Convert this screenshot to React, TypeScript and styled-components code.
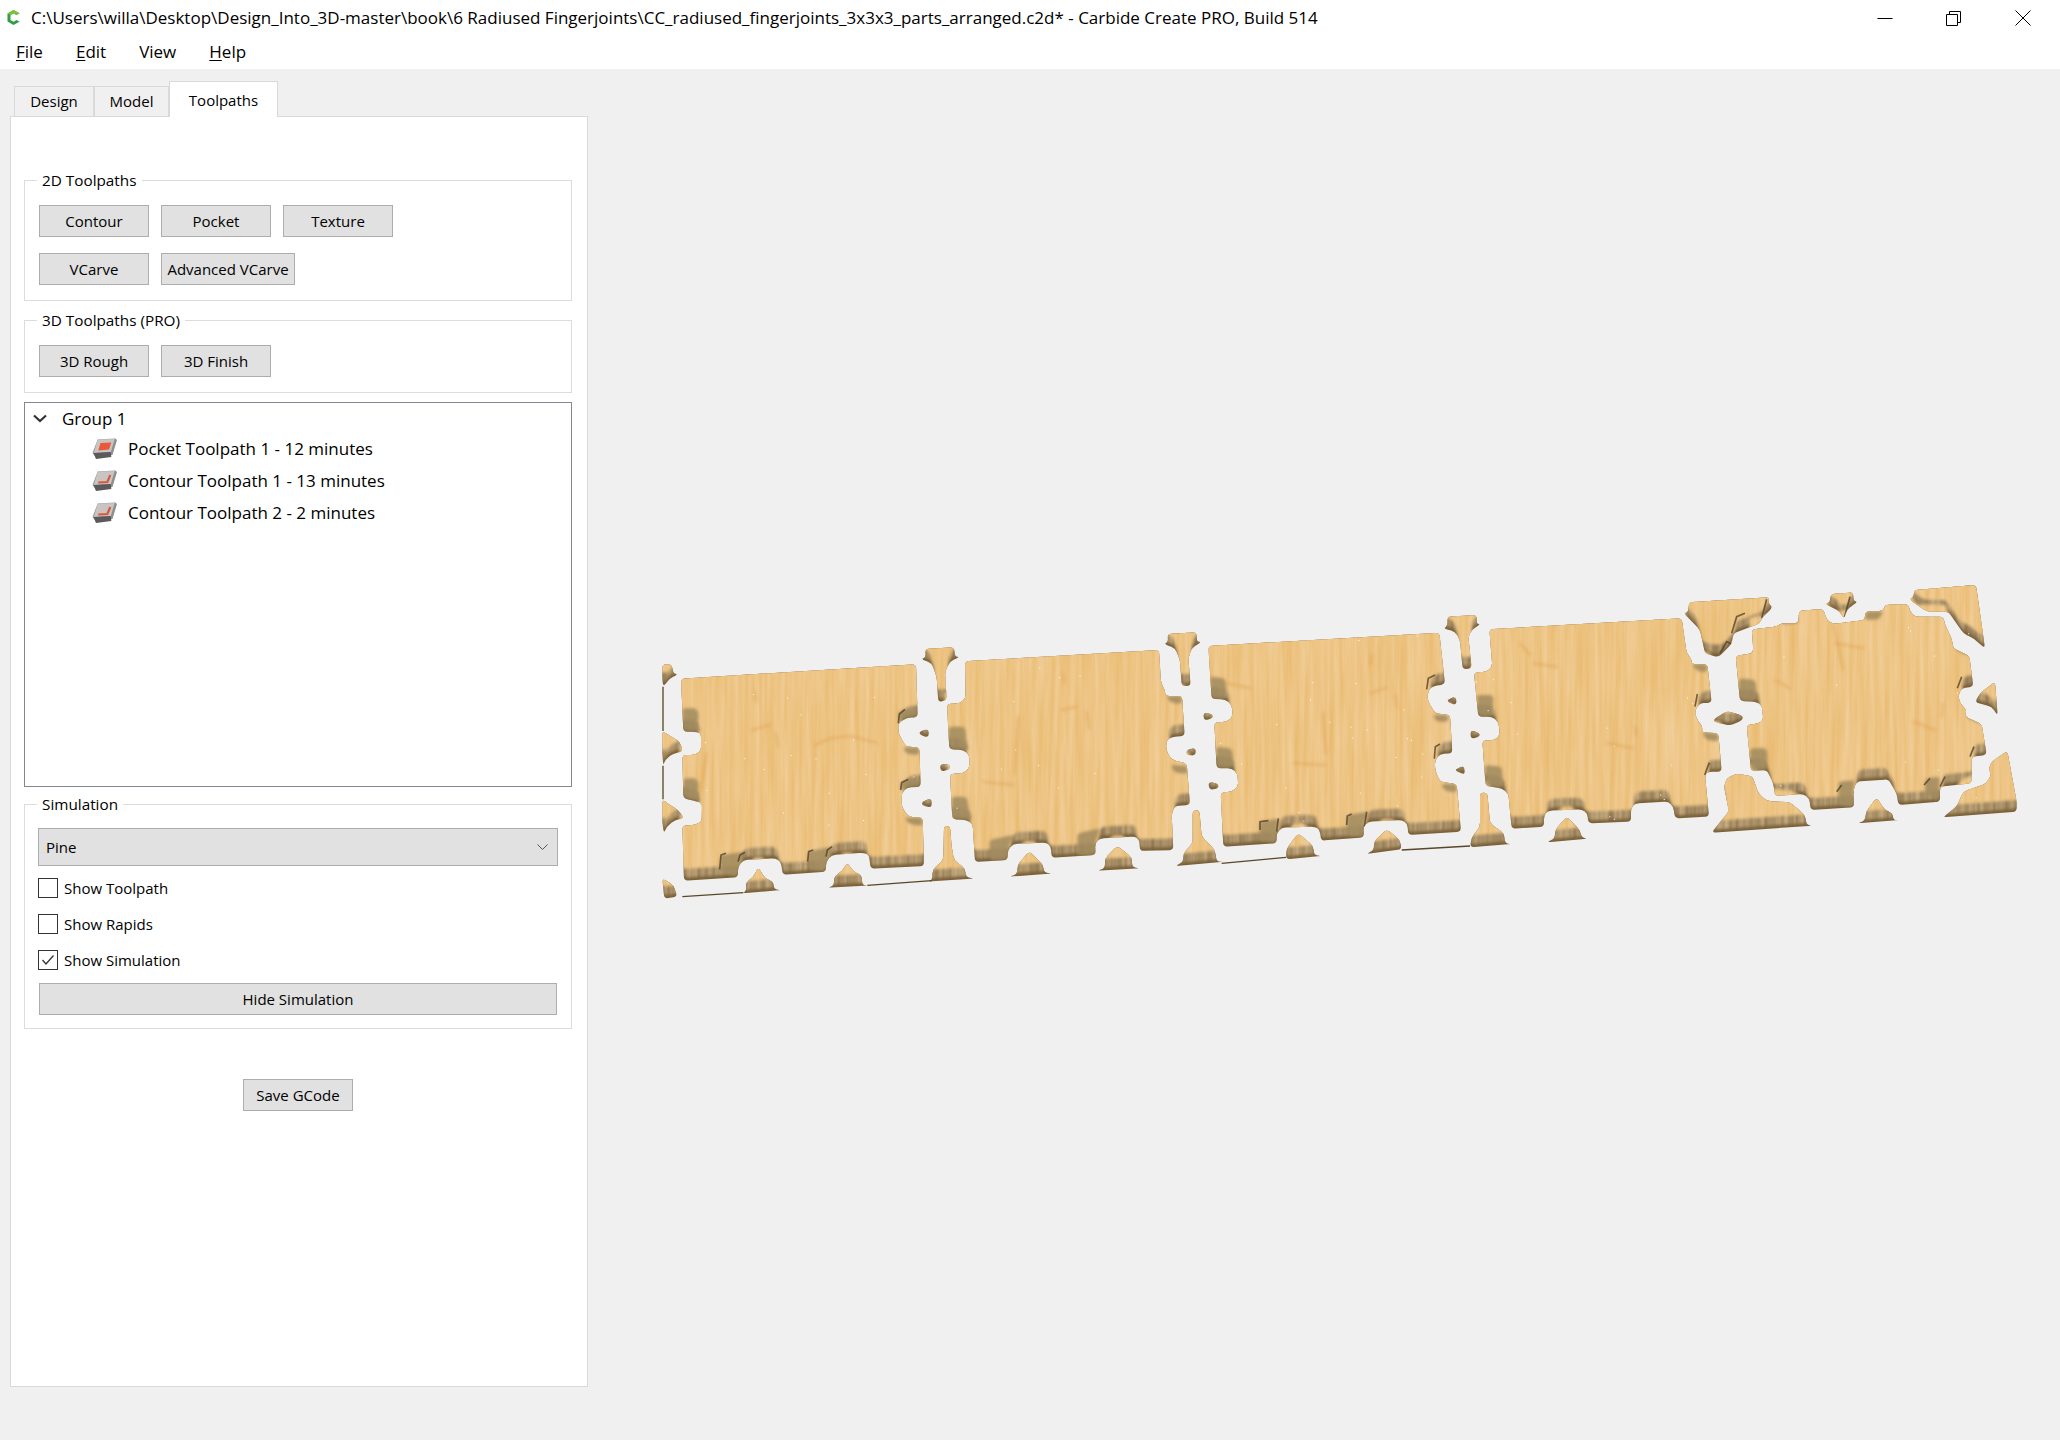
import * as React from "react";
import styled, { createGlobalStyle } from "styled-components";

const GlobalStyle = createGlobalStyle`
  html, body {
    margin: 0;
    padding: 0;
    background: #f0f0f0;
  }
  body {
    font-family: "Open Sans", "Noto Sans", sans-serif;
    font-size: 15px;
    color: #000;
  }
`;

const Window = styled.div`
  display: flex;
  flex-direction: column;
  width: 2060px;
  height: 1440px;
  overflow: hidden;
`;

const TitleBar = styled.div`
  display: flex;
  align-items: center;
  height: 35px;
  background: #fff;
  padding: 0 3px 0 6px;
`;

const TitleText = styled.span`
  margin-left: 10px;
  flex: 1;
  font-size: 17px;
  white-space: nowrap;
`;

const WindowControl = styled.div`
  display: flex;
  align-items: center;
  justify-content: center;
  width: 69px;
  height: 35px;
`;

const MenuBar = styled.div`
  display: flex;
  height: 33px;
  padding-bottom: 1px;
  align-items: center;
  background: #fff;
  padding-left: 16px;
  gap: 33px;
  font-size: 17px;
`;

const Mnemonic = styled.span`
  text-decoration: underline;
  text-underline-offset: 2px;
`;

const Content = styled.div`
  flex: 1;
  display: flex;
`;

const Sidebar = styled.div`
  display: flex;
  flex-direction: column;
  flex: none;
  box-sizing: border-box;
  width: 578px;
  margin-left: 10px;
  padding-top: 13px;
  height: 1318px;
`;

const TabRow = styled.div`
  display: flex;
  align-items: flex-end;
  height: 35px;
  padding-left: 4px;
  margin-bottom: -1px;
  position: relative;
  z-index: 1;
`;

const Tab = styled.div<{ $active?: boolean; $w: number }>`
  display: flex;
  align-items: center;
  justify-content: center;
  box-sizing: border-box;
  width: ${(p) => p.$w}px;
  height: ${(p) => (p.$active ? 36 : 31)}px;
  padding-bottom: ${(p) => (p.$active ? 0 : 2)}px;
  border: 1px solid #d9d9d9;
  border-bottom: ${(p) => (p.$active ? "0" : "1px solid #d9d9d9")};
  background: ${(p) => (p.$active ? "#fff" : "#f0f0f0")};
`;

const Panel = styled.div`
  flex: 1;
  display: flex;
  flex-direction: column;
  box-sizing: border-box;
  background: #fff;
  border: 1px solid #d9d9d9;
  padding: 53px 15px 0 13px;
`;

const Group = styled.fieldset<{ $mt?: number; $pt?: number; $pb?: number }>`
  box-sizing: border-box;
  margin: ${(p) => p.$mt ?? 0}px 0 0;
  min-width: 0;
  border: 1px solid #dcdcdc;
  padding: ${(p) => p.$pt ?? 15}px 14px ${(p) => p.$pb ?? 15}px;
`;

const GroupTitle = styled.legend`
  margin-left: -2px;
  padding: 0 5px;
  height: 20px;
  line-height: 20px;
  font-size: 15.3px;
`;

const ButtonRow = styled.div<{ $mt?: number }>`
  display: flex;
  gap: 12px;
  margin-top: ${(p) => p.$mt ?? 0}px;
`;

const Button = styled.div<{ $w: number }>`
  display: flex;
  align-items: center;
  justify-content: center;
  box-sizing: border-box;
  width: ${(p) => p.$w}px;
  height: 32px;
  background: #e1e1e1;
  border: 1px solid #adadad;
  white-space: nowrap;
`;

const SaveButton = styled(Button)`
  align-self: center;
  margin-top: 50px;
`;

const HideButton = styled(Button)`
  margin-top: 13px;
`;

const Tree = styled.div`
  box-sizing: border-box;
  height: 385px;
  margin-top: 9px;
  border: 1px solid #828790;
  padding-top: 1px;
  font-size: 17px;
`;

const GroupRow = styled.div`
  display: flex;
  align-items: center;
  height: 28px;
  padding-left: 8px;
  gap: 15px;
`;

const TreeItem = styled.div`
  display: flex;
  align-items: center;
  height: 32px;
  padding-left: 67px;
  gap: 11px;
`;

const Combo = styled.div`
  display: flex;
  align-items: center;
  justify-content: space-between;
  box-sizing: border-box;
  height: 38px;
  margin: 0 -1px;
  padding: 0 9px 0 7px;
  background: #e1e1e1;
  border: 1px solid #adadad;
`;

const CheckRow = styled.div<{ $mt: number }>`
  display: flex;
  align-items: center;
  gap: 6px;
  height: 20px;
  margin: ${(p) => p.$mt}px -1px 0;
`;

const CheckBox = styled.div`
  display: flex;
  align-items: center;
  justify-content: center;
  box-sizing: border-box;
  width: 20px;
  height: 20px;
  background: #fff;
  border: 1px solid #333;
`;

const Canvas = styled.div`
  flex: 1;
  padding: 501px 0 0 62px;
`;

const WoodSvg = styled.svg`
  display: block;
`;

// every outline below was read off a 3x crop, so each part carries the crop origin
type Part = { o: [number, number]; pts: string };
const A: [number, number] = [650, 620];
const B: [number, number] = [1150, 600];
const C: [number, number] = [1620, 570];

const parts: Part[] = [
  // sheet 1
  { o: A, pts: "93,176 798,133 803,292 770,293 745,310 745,340 768,380 808,382 812,500 770,503 755,520 755,560 775,590 818,593 822,738 662,746 657,705 640,698 545,705 528,725 528,755 398,764 393,725 375,715 280,720 264,740 264,772 102,782 97,617 135,615 155,605 156,550 140,544 100,535 97,405 135,405 153,392 153,340 135,335 100,335" },
  { o: A, pts: "37,133 65,132 70,160 84,163 60,175 40,200 37,180" },
  { o: A, pts: "37,333 60,348 90,365 98,395 70,400 45,420 40,437 37,400" },
  { o: A, pts: "37,538 60,555 85,570 102,595 75,600 50,620 42,640 37,610" },
  { o: A, pts: "37,775 70,795 82,830 43,836" },
  { o: A, pts: "325,742 345,775 370,785 372,808 396,810 277,820 290,812 287,788 310,770" },
  { o: A, pts: "592,728 610,755 635,765 637,795 655,797 531,803 552,797 552,770 575,755" },
  { o: A, pts: "882,618 900,618 905,680 912,720 945,745 948,772 975,775 835,785 847,778 847,750 880,720" },
  { o: A, pts: "825,87 912,82 915,110 930,110 900,125 885,155 890,240 865,247 860,170 845,130 813,117 828,112" },
  { o: A, pts: "808,335 836,327 836,353 810,345" },
  { o: A, pts: "870,432 900,433 900,448 872,455" },
  { o: A, pts: "815,545 845,535 845,563 818,557" },
  { o: A, pts: "1138,694 1180,735 1182,758 1208,760 1077,770 1102,762 1102,735" },
  { o: A, pts: "1402,678 1445,712 1447,742 1470,745 1341,752 1365,745 1365,715" },
  // sheet 2
  { o: A, pts: "945,124 1527,90 1533,190 1545,210 1546,228 1596,228 1604,348 1570,350 1550,360 1548,390 1565,420 1610,430 1620,555 1575,558 1565,580 1570,690 1470,693 1468,660 1455,650 1350,655 1335,670 1337,705 1205,713 1203,680 1190,668 1090,672 1073,690 1073,720 975,726 968,612 950,600 907,598 900,462 940,460 958,445 958,405 940,390 898,388 891,252 930,250 947,235" },
  // sheet 3
  { o: B, pts: "175,138 868,98 885,253 850,258 835,270 832,300 855,340 900,345 907,460 870,462 855,480 855,510 870,545 920,552 933,695 775,705 772,670 755,660 655,665 640,680 642,712 513,722 510,690 495,680 395,683 380,700 380,730 220,740 212,578 245,575 265,560 262,520 245,505 200,505 193,368 230,365 248,350 246,315 225,298 185,297" },
  { o: B, pts: "52,102 140,97 140,125 155,125 125,145 115,175 122,258 95,258 90,180 75,145 42,132 55,125" },
  { o: B, pts: "892,50 980,45 980,72 992,72 965,90 955,110 965,205 938,208 930,120 915,95 880,85 893,78" },
  { o: B, pts: "128,632 148,630 155,710 195,750 200,785 225,785 75,798 100,785 100,760 128,730" },
  { o: B, pts: "990,578 1012,578 1020,670 1062,700 1065,730 1085,732 960,742 965,712 990,680" },
  { o: B, pts: "445,700 490,738 492,765 515,768 408,778 410,745" },
  { o: B, pts: "710,688 750,720 755,748 648,762 672,750 672,725" },
  { o: B, pts: "1250,650 1290,690 1295,713 1315,716 1190,727 1215,715 1215,690" },
  { o: B, pts: "160,337 188,343 188,355 162,362" },
  { o: B, pts: "110,450 137,443 137,467 110,465" },
  { o: B, pts: "175,545 205,552 205,565 178,570" },
  { o: B, pts: "892,298 918,290 920,315 895,308" },
  { o: B, pts: "962,390 990,400 988,410 962,417" },
  { o: B, pts: "912,510 942,497 945,525" },
  // sheet 4
  { o: B, pts: "1018,88 1595,55 1610,160 1625,178 1625,192 1672,193 1685,308 1650,310 1635,330 1638,355 1658,380 1655,397 1705,400 1715,515 1675,515 1665,525 1677,650 1575,655 1570,620 1555,605 1455,610 1443,625 1443,665 1315,670 1312,640 1295,628 1195,632 1182,645 1182,680 1085,686 1075,580 1055,565 1007,558 997,422 1035,420 1050,405 1045,365 1025,350 985,350 972,218 1010,215 1027,200" },
  // sheet 5 and its offcuts
  { o: C, pts: "395,178 470,170 482,160 535,160 537,122 610,117 620,150 640,162 735,150 735,125 790,122 795,105 865,102 870,125 885,140 970,140 975,165 995,205 1000,235 1048,258 1060,350 1025,355 1015,375 1020,400 1040,420 1035,440 1085,462 1100,555 1055,560 1055,640 960,650 960,695 835,705 830,670 805,628 710,635 700,660 702,712 572,720 568,685 550,672 465,678 460,640 440,600 393,603 380,465 415,460 430,450 425,405 405,395 360,393 347,258 395,250 400,240" },
  { o: C, pts: "207,97 448,82 445,100 458,112 425,145 420,160 340,190 335,222 295,262 255,250 240,180 192,130 205,125" },
  { o: C, pts: "632,72 700,67 700,92 713,95 680,120 672,147 660,125 615,102 630,97" },
  { o: C, pts: "882,60 1068,45 1095,235 1060,205 1030,190 985,125 920,125 868,88 882,80" },
  { o: C, pts: "1125,335 1133,437 1115,410 1065,397 1080,370" },
  { o: C, pts: "1162,543 1190,695 1190,725 968,742 1010,710 1030,665 1100,640 1115,610 1105,600 1115,575" },
  { o: C, pts: "320,625 350,610 398,620 415,670 440,693 510,697 555,735 560,765 578,767 275,788 305,750 327,725 312,650" },
  { o: C, pts: "282,447 322,423 368,437 368,450 330,467 282,455" },
  { o: C, pts: "770,683 795,720 818,730 820,750 840,750 712,760 735,752 738,725" },
];

// the side walls seen inside the notches, tan and a little soft
const patches: Part[] = [
  { o: A, pts: "97,265 140,265 148,290 140,310 155,335 100,335" },
  { o: A, pts: "100,475 140,475 148,500 140,520 156,545 100,535" },
  { o: A, pts: "757,382 808,382 808,405 770,402" },
  { o: A, pts: "763,592 818,593 818,618 776,612" },
  { o: A, pts: "745,275 803,265 803,292 770,293 745,310" },
  { o: A, pts: "752,485 812,475 812,500 770,503 752,515" },
  { o: A, pts: "210,705 285,695 280,720 264,740 264,772 210,750" },
  { o: A, pts: "473,695 545,680 545,705 528,725 528,755 473,745" },
  { o: A, pts: "895,320 945,320 950,370 958,390 898,388" },
  { o: A, pts: "905,530 950,530 958,575 968,600 907,598" },
  { o: A, pts: "1018,660 1090,645 1073,690 1073,720 1020,722" },
  { o: A, pts: "1282,640 1350,625 1335,670 1337,705 1282,708" },
  { o: B, pts: "47,288 96,288 96,312 62,308" },
  { o: B, pts: "60,495 112,497 113,522 75,518" },
  { o: B, pts: "180,230 225,235 230,265 225,298 185,297" },
  { o: B, pts: "198,440 245,445 250,475 245,505 200,505" },
  { o: B, pts: "850,345 895,345 895,365 860,365 852,352" },
  { o: B, pts: "872,552 920,552 922,577 885,573" },
  { o: B, pts: "328,665 390,655 380,700 380,730 328,720" },
  { o: B, pts: "590,645 655,635 640,680 642,712 590,705" },
  { o: B, pts: "980,285 1030,285 1030,320 1025,350 985,350" },
  { o: B, pts: "1005,495 1055,500 1058,530 1055,565 1007,558" },
  { o: B, pts: "1625,192 1672,193 1672,217 1640,213" },
  { o: B, pts: "1655,397 1705,400 1706,424 1670,420" },
  { o: C, pts: "355,325 405,330 410,355 405,395 360,393" },
  { o: C, pts: "390,535 440,535 443,565 440,600 393,603" },
  { o: C, pts: "482,141 535,141 535,160 482,162" },
  { o: C, pts: "735,125 790,122 778,148 735,150" },
  { o: C, pts: "1000,235 1045,235 1045,258" },
  { o: C, pts: "1035,440 1085,438 1085,462" },
  { o: C, pts: "655,635 705,630 700,660 702,712 655,705" },
  { o: C, pts: "915,625 960,620 955,695 915,670" },
];

// burnt lines the cutter left at the bottom and on the far left
const burns: Part[] = [
  { o: A, pts: "97,830 280,818" },
  { o: A, pts: "652,796 845,782" },
  { o: A, pts: "39,200 39,333" },
  { o: A, pts: "39,437 39,538" },
  { o: B, pts: "215,790 408,772" },
  { o: B, pts: "755,750 960,738" },
];

// short dark ticks at the notch shoulders
const ticks: Part[] = [
  { o: A, pts: "209,748 213,705 228,700" },
  { o: A, pts: "264,725 270,705 285,697" },
  { o: A, pts: "473,725 476,695 490,690" },
  { o: A, pts: "528,710 532,690 546,680" },
  { o: A, pts: "745,310 748,282 765,268" },
  { o: A, pts: "752,510 755,488 775,478" },
  { o: B, pts: "830,268 835,235 855,225" },
  { o: B, pts: "853,476 856,440 870,432" },
  { o: B, pts: "330,690 330,665 355,662" },
  { o: B, pts: "380,695 385,655" },
  { o: B, pts: "590,675 592,648 605,642" },
  { o: B, pts: "643,680 650,635" },
  { o: C, pts: "335,190 350,140 375,130" },
  { o: C, pts: "425,145 440,88" },
  { o: C, pts: "300,250 320,215 335,222" },
  { o: C, pts: "672,147 690,80" },
  { o: C, pts: "225,410 232,372" },
  { o: C, pts: "254,615 268,578" },
  { o: C, pts: "1012,355 1025,320" },
  { o: C, pts: "1050,560 1062,530" },
  { o: C, pts: "650,665 665,645" },
  { o: C, pts: "702,670 715,635" },
  { o: C, pts: "960,650 975,620" },
  { o: C, pts: "912,645 930,625" },
];

// streaks and knots on the wood surface
const knots: Part[] = [
  { o: A, pts: "315,215 320,245" },
  { o: A, pts: "305,330 360,315" },
  { o: A, pts: "378,340 384,380" },
  { o: A, pts: "495,375 540,355 600,348 680,368" },
  { o: A, pts: "170,400 150,520" },
  { o: A, pts: "1240,160 1245,190" },
  { o: A, pts: "1235,270 1280,260" },
  { o: A, pts: "1310,275 1318,325" },
  { o: A, pts: "1105,290 1095,460" },
  { o: A, pts: "1000,485 1090,495" },
  { o: B, pts: "230,250 300,265" },
  { o: B, pts: "665,165 662,195" },
  { o: B, pts: "660,280 710,262" },
  { o: B, pts: "737,285 742,325" },
  { o: B, pts: "520,340 528,460" },
  { o: B, pts: "430,490 525,495" },
  { o: B, pts: "1150,190 1220,200" },
  { o: B, pts: "1110,130 1140,165" },
  { o: B, pts: "1455,380 1460,405" },
  { o: B, pts: "1370,430 1450,445" },
  { o: C, pts: "645,220 730,235" },
  { o: C, pts: "465,330 510,355" },
  { o: C, pts: "970,400 965,440" },
  { o: C, pts: "880,455 945,480" },
  { o: C, pts: "640,165 670,300" },
];

const toPoints = (s: string): number[][] => s.split(" ").map((p) => p.split(",").map(Number));

// closed outline with softened corners, so the notches read as cut by a round tool
const outline = (s: string, r = 12): string => {
  const pts = toPoints(s);
  const n = pts.length;
  let d = "";
  pts.forEach((p, i) => {
    const prev = pts[(i + n - 1) % n];
    const next = pts[(i + 1) % n];
    const toward = (q: number[]) => {
      const len = Math.hypot(q[0] - p[0], q[1] - p[1]) || 1;
      const k = Math.min(r, len / 2) / len;
      return [p[0] + (q[0] - p[0]) * k, p[1] + (q[1] - p[1]) * k];
    };
    const a = toward(prev);
    const b = toward(next);
    d += `${i ? "L" : "M"}${a[0].toFixed(1)} ${a[1].toFixed(1)}Q${p[0]} ${p[1]} ${b[0].toFixed(1)} ${b[1].toFixed(1)}`;
  });
  return d + "Z";
};

const line = (s: string): string =>
  toPoints(s).map((p, i) => `${i ? "L" : "M"}${p[0]} ${p[1]}`).join("");

const place = (o: [number, number], dx = 0, dy = 0) =>
  `translate(${o[0] + dx / 3} ${o[1] + dy / 3}) scale(${1 / 3})`;

// seeded so the pale flecks stay in the same place on every run
const flecks = (() => {
  const out: number[][] = [];
  let seed = 17;
  const next = () => {
    seed = (seed * 16807) % 2147483647;
    return seed / 2147483647;
  };
  for (let i = 0; i < 110; i++) out.push([690 + next() * 1290, 610 + next() * 220]);
  return out;
})();

const WoodSheets = () => (
  <WoodSvg width={1400} height={340} viewBox="650 570 1400 340">
    <defs>
      <filter id="wood" x="0" y="0" width="1" height="1" colorInterpolationFilters="sRGB">
        <feTurbulence type="fractalNoise" baseFrequency="0.2 0.01" numOctaves={3} seed={4} />
        <feColorMatrix values="0.04 0 0 0 0.91  0.1 0 0 0 0.72  0.22 0 0 0 0.41  0 0 0 0 1" />
      </filter>
      <filter id="side" x="0" y="0" width="1" height="1" colorInterpolationFilters="sRGB">
        <feTurbulence type="fractalNoise" baseFrequency="0.2 0.004" numOctaves={2} seed={9} />
        <feColorMatrix values="0.3 0 0 0 0.52  0.3 0 0 0 0.42  0.26 0 0 0 0.28  0 0 0 0 1" />
      </filter>
      <filter id="soft" filterUnits="userSpaceOnUse" x="650" y="570" width="1400" height="340">
        <feGaussianBlur stdDeviation="1.4" />
      </filter>
      <filter id="softer" x="-30%" y="-30%" width="160%" height="160%">
        <feGaussianBlur stdDeviation="1.8" />
      </filter>
      <clipPath id="silhouette">
        {parts.map((p, i) => (
          <path key={i} d={outline(p.pts)} transform={place(p.o)} />
        ))}
      </clipPath>
      <mask id="topFace" maskUnits="userSpaceOnUse" x="650" y="570" width="1400" height="340">
        <g fill="#fff" filter="url(#soft)">
          {parts.flatMap((p, i) =>
            [-9, 0, 9].map((dx) => (
              <path key={`${i}${dx}`} d={outline(p.pts)} transform={place(p.o, dx, -36)} />
            ))
          )}
        </g>
      </mask>
      <mask id="lowerFace" maskUnits="userSpaceOnUse" x="650" y="570" width="1400" height="340">
        <g fill="#fff" filter="url(#soft)">
          {parts.map((p, i) => (
            <path key={i} d={outline(p.pts)} transform={place(p.o, 0, -9)} />
          ))}
        </g>
      </mask>
    </defs>
    <g clipPath="url(#silhouette)">
      <rect x="650" y="570" width="1400" height="340" fill="#7a6038" />
      <g mask="url(#lowerFace)">
        <rect x="650" y="570" width="1400" height="340" filter="url(#side)" />
      </g>
      <g mask="url(#topFace)">
        <rect x="650" y="570" width="1400" height="340" filter="url(#wood)" />
      </g>
      <g filter="url(#softer)" stroke="#d88f35" strokeOpacity="0.38" strokeWidth="6" fill="none" strokeLinecap="round">
        {knots.map((k, i) => (
          <path key={i} d={line(k.pts)} transform={place(k.o)} />
        ))}
      </g>
      <g filter="url(#softer)" fill="#a08a5e" fillOpacity="0.85">
        {patches.map((k, i) => (
          <path key={i} d={outline(k.pts)} transform={place(k.o)} />
        ))}
      </g>
      <g fill="#fff">
        {flecks.map((f, i) => (
          <rect key={i} x={f[0]} y={f[1]} width="1" height="1" />
        ))}
      </g>
      <g stroke="#54432a" strokeWidth="5" fill="none" strokeOpacity="0.8">
        {ticks.map((k, i) => (
          <path key={i} d={line(k.pts)} transform={place(k.o)} />
        ))}
      </g>
    </g>
    <g stroke="#5a4628" strokeWidth="4" fill="none">
      {burns.map((k, i) => (
        <path key={i} d={line(k.pts)} transform={place(k.o)} />
      ))}
    </g>
  </WoodSvg>
);

const AppLogo = () => (
  <svg width="15" height="17" viewBox="0 0 15 17">
    <path d="M13.5 4.2 7.5 1 1.5 4.4v8.2l6 3.4 6-3.2-2.8-1.8-3.2 1.8-3-1.8V6.2l3-1.8 3.2 1.7z" fill="#2f9e44" />
    <path d="M7.5 1 13.5 4.2 10.7 6.1 7.5 4.4 4.5 6.2 1.5 4.4z" fill="#7cc242" />
  </svg>
);

const ToolpathIcon = ({ pocket }: { pocket?: boolean }) => (
  <svg width="25" height="23" viewBox="0 0 22 23" preserveAspectRatio="none">
    <path d="M5 2.5 20.5 1.5 22 3 18 18 3 20 .5 16z" fill="#8f8f8f" />
    <path d="M5 2.5 20 2 16.5 15 1.5 16z" fill="#c9c4c2" />
    <path d="M1.5 16 16.5 15 17 20 3.5 22z" fill="#5a5a5a" />
    {pocket ? (
      <path d="M7.5 6 17 5.5 15 12.5 5.5 13.5z" fill="#e8583a" />
    ) : (
      <path d="M5.5 13.5 13.5 13 16 6" fill="none" stroke="#d9573c" strokeWidth="2" />
    )}
  </svg>
);

const Chevron = () => (
  <svg width="14" height="9" viewBox="0 0 14 9">
    <path d="M1 1.5 7 7 13 1.5" fill="none" stroke="#333" strokeWidth="2.2" />
  </svg>
);

export default function App(): React.JSX.Element {
  return (
    <Window>
      <GlobalStyle />
      <TitleBar>
        <AppLogo />
        <TitleText>
          C:\Users\willa\Desktop\Design_Into_3D-master\book\6 Radiused Fingerjoints\CC_radiused_fingerjoints_3x3x3_parts_arranged.c2d* - Carbide Create PRO, Build 514
        </TitleText>
        <WindowControl>
          <svg width="16" height="16" viewBox="0 0 16 16">
            <path d="M0.5 8.5h15" stroke="#000" fill="none" />
          </svg>
        </WindowControl>
        <WindowControl>
          <svg width="16" height="16" viewBox="0 0 16 16">
            <path d="M0.5 4.5h11v11h-11zM3.5 4.5v-3h11v11h-3" stroke="#000" fill="none" />
          </svg>
        </WindowControl>
        <WindowControl>
          <svg width="16" height="16" viewBox="0 0 16 16">
            <path d="M0.5 0.5 15.5 15.5M15.5 0.5 0.5 15.5" stroke="#000" fill="none" />
          </svg>
        </WindowControl>
      </TitleBar>
      <MenuBar>
        <span><Mnemonic>F</Mnemonic>ile</span>
        <span><Mnemonic>E</Mnemonic>dit</span>
        <span>View</span>
        <span><Mnemonic>H</Mnemonic>elp</span>
      </MenuBar>
      <Content>
        <Sidebar>
          <TabRow>
            <Tab $w={80}>Design</Tab>
            <Tab $w={75}>Model</Tab>
            <Tab $w={109} $active>Toolpaths</Tab>
          </TabRow>
          <Panel>
            <Group>
              <GroupTitle>2D Toolpaths</GroupTitle>
              <ButtonRow>
                <Button $w={110}>Contour</Button>
                <Button $w={110}>Pocket</Button>
                <Button $w={110}>Texture</Button>
              </ButtonRow>
              <ButtonRow $mt={16}>
                <Button $w={110}>VCarve</Button>
                <Button $w={134}>Advanced VCarve</Button>
              </ButtonRow>
            </Group>
            <Group $mt={9}>
              <GroupTitle>3D Toolpaths (PRO)</GroupTitle>
              <ButtonRow>
                <Button $w={110}>3D Rough</Button>
                <Button $w={110}>3D Finish</Button>
              </ButtonRow>
            </Group>
            <Tree>
              <GroupRow>
                <Chevron />
                <span>Group 1</span>
              </GroupRow>
              <TreeItem>
                <ToolpathIcon pocket />
                <span>Pocket Toolpath 1 - 12 minutes</span>
              </TreeItem>
              <TreeItem>
                <ToolpathIcon />
                <span>Contour Toolpath 1 - 13 minutes</span>
              </TreeItem>
              <TreeItem>
                <ToolpathIcon />
                <span>Contour Toolpath 2 - 2 minutes</span>
              </TreeItem>
            </Tree>
            <Group $mt={7} $pt={14} $pb={13}>
              <GroupTitle>Simulation</GroupTitle>
              <Combo>
                <span>Pine</span>
                <svg width="11" height="7" viewBox="0 0 11 7">
                  <path d="M0.5 0.5 5.5 5.5 10.5 0.5" fill="none" stroke="#555" />
                </svg>
              </Combo>
              <CheckRow $mt={12}>
                <CheckBox />
                <span>Show Toolpath</span>
              </CheckRow>
              <CheckRow $mt={16}>
                <CheckBox />
                <span>Show Rapids</span>
              </CheckRow>
              <CheckRow $mt={16}>
                <CheckBox>
                  <svg width="14" height="12" viewBox="0 0 14 12">
                    <path d="M1.5 6 5 10 12.5 1.5" fill="none" stroke="#333" strokeWidth="1.3" />
                  </svg>
                </CheckBox>
                <span>Show Simulation</span>
              </CheckRow>
              <HideButton $w={518}>Hide Simulation</HideButton>
            </Group>
            <SaveButton $w={110}>Save GCode</SaveButton>
          </Panel>
        </Sidebar>
        <Canvas>
          <WoodSheets />
        </Canvas>
      </Content>
    </Window>
  );
}
